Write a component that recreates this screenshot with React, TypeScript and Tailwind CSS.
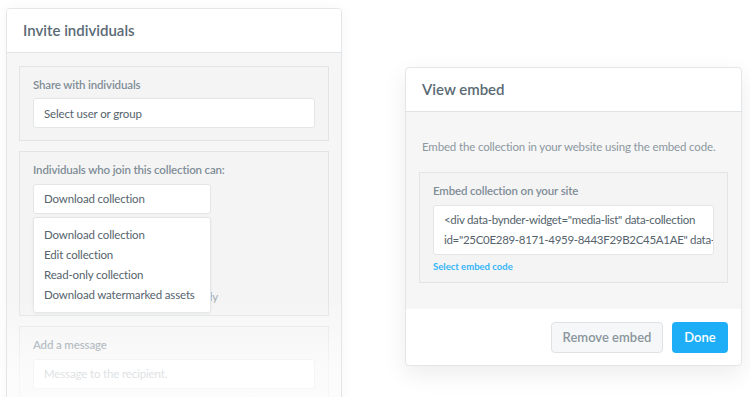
export default function App() {
  return (
    <main
      className="relative flex h-[397px] w-[750px] overflow-hidden bg-white text-[#5d6b74]"
      style={{ fontFamily: "Lato, 'Noto Sans', sans-serif" }}
    >
      <InviteCard />
      <EmbedCard />
    </main>
  );
}

function InviteCard() {
  return (
    <div className="relative ml-[6px] mt-[8px] h-[420px] w-[336px] shrink-0 overflow-hidden rounded-[4px] border border-[#e3e6e8] bg-[#f6f6f7] shadow-[0_0_14px_rgba(0,0,0,0.04)]">
      <div className="flex h-[44px] items-center border-b border-[#e1e4e6] bg-white px-[16px]">
        <h2 className="text-[15px] font-semibold text-[#5a6a74]">Invite individuals</h2>
      </div>

      <div className="flex flex-col gap-[10px] px-[12px] pt-[13px] text-[11.5px] tracking-[-0.15px]">
        <section className="border border-[#e2e4e6] bg-[#f4f4f5] px-[13px] pb-[12px] pt-[9px]">
          <div className="font-semibold text-[#808d95]">Share with individuals</div>
          <div className="mt-[5px] flex h-[30px] items-center rounded-[3px] border border-[#e3e6e8] bg-white px-[10px] text-[#55636c]">
            Select user or group
          </div>
        </section>

        <section className="relative h-[165px] border border-[#e2e4e6] bg-[#f4f4f5] px-[13px] pt-[9px]">
          <div className="font-semibold text-[#808d95]">Individuals who join this collection can:</div>
          <div className="mt-[5px] flex h-[30px] w-[178px] items-center rounded-[3px] border border-[#e3e6e8] bg-white px-[10px] text-[#55636c]">
            Download collection
          </div>
          {/* option text sitting under the open menu, only its tail peeks out */}
          <div className="absolute left-[177px] top-[136px] text-[#a3adb3]">only</div>
          <ul className="absolute left-[13px] top-[65px] z-10 w-[178px] rounded-[3px] border border-[#e3e6e8] bg-white py-[7px] leading-[20px] text-[#55636c] shadow-[0_1px_3px_rgba(0,0,0,0.06)]">
            <li className="px-[10px]">Download collection</li>
            <li className="px-[10px]">Edit collection</li>
            <li className="px-[10px]">Read-only collection</li>
            <li className="whitespace-nowrap px-[10px]">Download watermarked assets</li>
          </ul>
        </section>

        <section className="border border-[#e2e4e6] bg-[#f4f4f5] px-[13px] pb-[12px] pt-[9px]">
          <div className="font-semibold text-[#808d95]">Add a message</div>
          <div className="mt-[5px] flex h-[30px] items-center rounded-[3px] border border-[#e3e6e8] bg-white px-[10px] text-[#a3adb3]">
            Message to the recipient.
          </div>
        </section>
      </div>

      <div className="pointer-events-none absolute inset-x-0 top-[290px] z-20 h-[130px] bg-gradient-to-b from-white/0 via-white/60 to-white/80" />
    </div>
  );
}

function EmbedCard() {
  return (
    <div className="ml-[63px] mt-[67px] h-[299px] w-[337px] shrink-0 overflow-hidden rounded-[4px] border border-[#e3e6e8] bg-white shadow-[0_8px_24px_rgba(0,0,0,0.08)]">
      <div className="flex h-[44px] items-center border-b border-[#e1e4e6] px-[16px]">
        <h2 className="text-[15px] font-semibold text-[#5a6a74]">View embed</h2>
      </div>

      <div className="h-[197px] bg-[#f6f6f7] px-[13px] pt-[26px] text-[11.5px] tracking-[-0.15px]">
        <p className="whitespace-nowrap px-[3px] text-[#8c979e]">
          Embed the collection in your website using the embed code.
        </p>
        <section className="mt-[17px] border border-[#e2e4e6] bg-[#f4f4f5] px-[13px] pb-[8px] pt-[9px]">
          <div className="font-semibold text-[#808d95]">Embed collection on your site</div>
          <div className="mt-[5px] overflow-hidden rounded-[3px] border border-[#e3e6e8] bg-white px-[10px] py-[4px] leading-[20px] tracking-[-0.3px] text-[#55636c]">
            <div className="whitespace-nowrap">&lt;div data-bynder-widget="media-list" data-collection</div>
            <div className="whitespace-nowrap">id="25C0E289-8171-4959-8443F29B2C45A1AE" data-</div>
          </div>
          <div className="mt-[5px] text-[9.5px] font-bold tracking-normal text-[#35b5f5]">Select embed code</div>
        </section>
      </div>

      <div className="flex justify-end gap-[9px] px-[13px] pt-[13px]">
        <button className="h-[31px] w-[112px] rounded-[4px] border border-[#dfe2e5] bg-[#f6f7f8] text-[13px] font-semibold text-[#8a969d]">
          Remove embed
        </button>
        <button className="h-[31px] w-[56px] rounded-[4px] bg-[#1eaef8] text-[13px] font-semibold text-white">
          Done
        </button>
      </div>
    </div>
  );
}
